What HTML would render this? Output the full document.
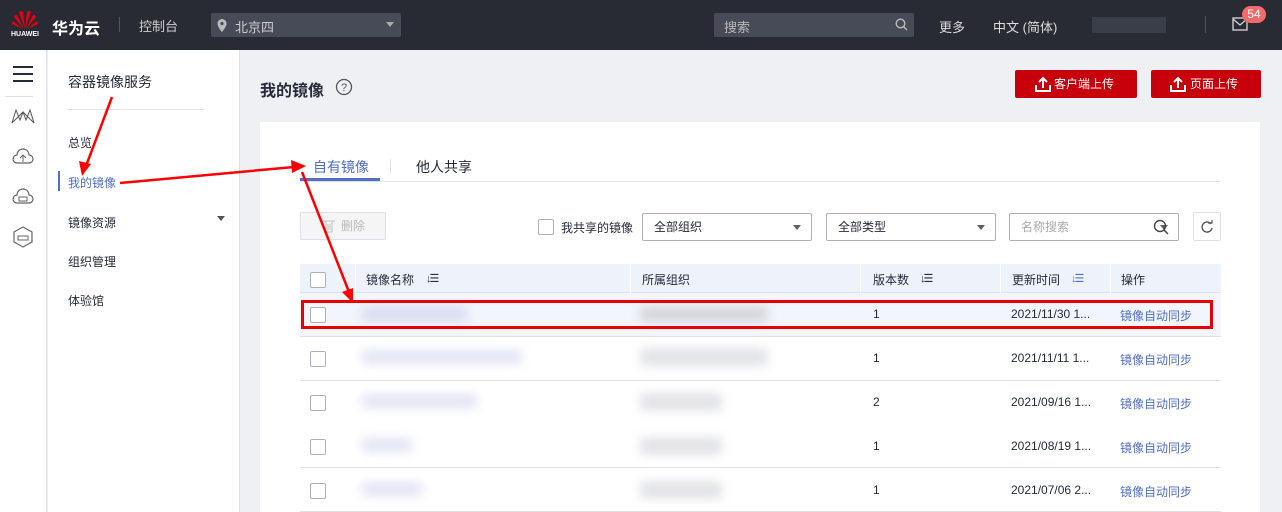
<!DOCTYPE html><html><head><meta charset="utf-8"><style>
*{margin:0;padding:0;box-sizing:border-box}
body{width:1282px;height:512px;overflow:hidden;position:relative;font-family:"Liberation Sans","Noto Sans CJK SC",sans-serif;font-size:12px;color:#252b3a;background:#eff0f4}
.a{position:absolute}
.cb{position:absolute;width:16px;height:16px;border:1px solid #adb0b8;border-radius:2px;background:#fff}
.sel{position:absolute;height:28px;border:1px solid #adb0b8;background:#fff;border-radius:2px;font-size:12px;line-height:26px;padding-left:11px}
.sel:after{content:"";position:absolute;right:10px;top:11px;border:4px solid transparent;border-top:5px solid #5e6066}
.row{position:absolute;left:300px;width:921px;height:44px;border-bottom:1px solid #dfe1e6;background:#fff}
.blur{position:absolute;filter:blur(5px);border-radius:4px}
.link{color:#526ecc}
.btn{position:absolute;top:70px;height:28px;background:#c7000b;color:#fff;font-size:12px;line-height:28px;border-radius:2px}
.srt{position:absolute;font-size:11px;letter-spacing:-2px}
</style></head><body>
<div class="a" style="left:0;top:0;width:1282px;height:50px;background:#282b33"></div>
<svg class="a" style="left:11px;top:9px" width="28" height="22" viewBox="0 0 28 22"><g fill="#e60012"><path d="M14 20 L8 3 Q10 1 12 3Z"/><path d="M14 20 L20 3 Q18 1 16 3Z"/><path d="M13 20 L3 8 Q4 5 6 6Z"/><path d="M15 20 L25 8 Q24 5 22 6Z"/><path d="M12 20 L1 15 Q1 13 2 12Z"/><path d="M16 20 L27 15 Q27 13 26 12Z"/></g></svg>
<div class="a" style="left:11px;top:31px;font-size:7px;color:#fff;font-weight:bold">HUAWEI</div>
<div class="a" style="left:52px;top:15px;font-size:16px;font-weight:bold;color:#fff">华为云</div>
<div class="a" style="left:119px;top:17px;width:1px;height:15px;background:#555"></div>
<div class="a" style="left:139px;top:16px;font-size:13px;color:#ccc">控制台</div>
<div class="a" style="left:211px;top:13px;width:190px;height:24px;background:#474b57;border-radius:2px"></div>
<svg class="a" style="left:217px;top:19px" width="10" height="13"><path d="M5 0a4.5 4.5 0 0 0-4.5 4.5C.5 8 5 13 5 13s4.5-5 4.5-8.5A4.5 4.5 0 0 0 5 0z" fill="#bbb"/><circle cx="5" cy="4.5" r="1.6" fill="#474b57"/></svg>
<div class="a" style="left:235px;top:17px;font-size:13px;color:#ccc">北京四</div>
<div class="a" style="left:386px;top:22px;border:4px solid transparent;border-top:5px solid #aaa"></div>
<div class="a" style="left:714px;top:13px;width:200px;height:24px;background:#474b57;border-radius:2px"></div>
<div class="a" style="left:724px;top:17px;font-size:13px;color:#bbb">搜索</div>
<svg class="a" style="left:895px;top:18px" width="13" height="13"><circle cx="5.5" cy="5.5" r="4.3" fill="none" stroke="#bbb" stroke-width="1.4"/><path d="M8.7 8.7 12 12" stroke="#bbb" stroke-width="1.4"/></svg>
<div class="a" style="left:939px;top:17px;font-size:13px;color:#ddd">更多</div>
<div class="a" style="left:993px;top:17px;font-size:13px;color:#ddd">中文 (简体)</div>
<div class="a" style="left:1092px;top:17px;width:74px;height:16px;background:#3a3e48"></div>
<div class="a" style="left:1205px;top:16px;width:1px;height:17px;background:#555"></div>
<svg class="a" style="left:1232px;top:17px" width="16" height="14"><rect x="1" y="1" width="14" height="12" fill="none" stroke="#ccc" stroke-width="1.4"/><path d="M1 2 8 8 15 2" fill="none" stroke="#ccc" stroke-width="1.4"/></svg>
<div class="a" style="left:1242px;top:6px;width:24px;height:17px;background:#f46a6a;border-radius:9px;color:#fff;font-size:12px;text-align:center;line-height:17px">54</div>
<div class="a" style="left:0;top:50px;width:47px;height:462px;background:#fff;border-right:1px solid #dfe1e6"></div>
<div class="a" style="left:13px;top:66px;width:20px;height:2px;background:#252b3a;box-shadow:0 7px 0 #252b3a,0 14px 0 #252b3a"></div>
<div class="a" style="left:5px;top:96px;width:28px;height:1px;background:#dfe1e6"></div>
<svg class="a" style="left:11px;top:108px" width="24" height="16"><path d="M1 15 5 2 9 12 12 4 15 12 19 2 23 15M1 15 12 4 23 15" fill="none" stroke="#555" stroke-width="1"/></svg>
<svg class="a" style="left:12px;top:148px" width="22" height="18"><path d="M5 15a4 4 0 0 1 0-8 6 6 0 0 1 12 0 4 4 0 0 1 0 8z" fill="none" stroke="#666" stroke-width="1.2"/><path d="M11 14V8M8 10l3-3 3 3" fill="none" stroke="#666"/></svg>
<svg class="a" style="left:12px;top:188px" width="22" height="18"><path d="M5 15a4 4 0 0 1 0-8 6 6 0 0 1 12 0 4 4 0 0 1 0 8z" fill="none" stroke="#666" stroke-width="1.2"/><rect x="7" y="9" width="8" height="4" fill="none" stroke="#666"/></svg>
<svg class="a" style="left:12px;top:226px" width="22" height="22"><path d="M11 1 20 6v10l-9 5-9-5V6z" fill="none" stroke="#666" stroke-width="1.2"/><rect x="6" y="10" width="10" height="4" fill="none" stroke="#666"/></svg>
<div class="a" style="left:48px;top:50px;width:192px;height:462px;background:#fff;border-right:1px solid #dfe1e6"></div>
<div class="a" style="left:68px;top:72px;font-size:14px">容器镜像服务</div>
<div class="a" style="left:68px;top:109px;width:136px;height:1px;background:#dfe1e6"></div>
<div class="a" style="left:68px;top:134px;font-size:12px">总览</div>
<div class="a" style="left:58px;top:171px;width:2px;height:20px;background:#526ecc"></div>
<div class="a link" style="left:68px;top:174px;font-size:12px">我的镜像</div>
<div class="a" style="left:68px;top:214px;font-size:12px">镜像资源</div>
<div class="a" style="left:217px;top:216px;border:4px solid transparent;border-top:5px solid #555"></div>
<div class="a" style="left:68px;top:253px;font-size:12px">组织管理</div>
<div class="a" style="left:68px;top:292px;font-size:12px">体验馆</div>
<div class="a" style="left:260px;top:77px;font-size:16px;font-weight:bold">我的镜像</div>
<svg class="a" style="left:335px;top:78px" width="18" height="18"><circle cx="9" cy="9" r="7.5" fill="none" stroke="#555" stroke-width="1.3"/><text x="9" y="13" font-size="11" text-anchor="middle" fill="#555" font-family="Liberation Sans">?</text></svg>
<div class="btn" style="left:1015px;width:122px"><svg class="a" style="left:20px;top:6px" width="16" height="16"><path d="M8 12V2M4 6l4-4 4 4M1 9v6h14V9" fill="none" stroke="#fff" stroke-width="2"/></svg><span class="a" style="left:39px">客户端上传</span></div>
<div class="btn" style="left:1151px;width:110px"><svg class="a" style="left:19px;top:6px" width="16" height="16"><path d="M8 12V2M4 6l4-4 4 4M1 9v6h14V9" fill="none" stroke="#fff" stroke-width="2"/></svg><span class="a" style="left:39px">页面上传</span></div>
<div class="a" style="left:260px;top:122px;width:1000px;height:390px;background:#fff"></div>
<div class="a" style="left:300px;top:181px;width:920px;height:1px;background:#dfe1e6"></div>
<div class="a link" style="left:313px;top:157px;font-size:14px">自有镜像</div>
<div class="a" style="left:300px;top:178px;width:80px;height:3px;background:#526ecc"></div>
<div class="a" style="left:390px;top:159px;width:1px;height:14px;background:#dfe1e6"></div>
<div class="a" style="left:416px;top:157px;font-size:14px">他人共享</div>
<div class="a" style="left:300px;top:212px;width:86px;height:28px;border:1px solid #dfe1e6;background:#f5f5f6;border-radius:2px;color:#bbb;line-height:26px;padding-left:40px">删除</div>
<svg class="a" style="left:322px;top:219px" width="14" height="14"><path d="M1 2h12M4 2v11h6V2M6 5v6M8 5v6" fill="none" stroke="#ccc" stroke-width="1.2"/></svg>
<div class="cb" style="left:538px;top:219px"></div>
<div class="a" style="left:561px;top:219px">我共享的镜像</div>
<div class="sel" style="left:642px;top:213px;width:170px">全部组织</div>
<div class="sel" style="left:826px;top:213px;width:170px">全部类型</div>
<div class="sel" style="left:1009px;top:213px;width:170px;color:#aaa">名称搜索</div>
<svg class="a" style="left:1153px;top:219px" width="16" height="16"><circle cx="7" cy="7" r="5.5" fill="none" stroke="#444" stroke-width="1.4"/><path d="M11 11 15 15" stroke="#444" stroke-width="1.5"/></svg>
<div class="a" style="left:1193px;top:212px;width:28px;height:29px;border:1px solid #dfe1e6;border-radius:2px"></div>
<svg class="a" style="left:1200px;top:220px" width="14" height="14"><path d="M11 4A5 5 0 1 0 12 8" fill="none" stroke="#555" stroke-width="1.4"/><path d="M8 3h4V0" fill="none" stroke="#555" stroke-width="1.2"/></svg>
<div class="a" style="left:300px;top:264px;width:921px;height:29px;background:#eef2fa;border-bottom:1px solid #dfe1e6"></div>
<div class="cb" style="left:310px;top:272px"></div>
<div class="a" style="left:355px;top:264px;width:1px;height:29px;background:#fff"></div>
<div class="a" style="left:366px;top:271px">镜像名称</div><div class="srt" style="left:426px;top:272px">↓☰</div>
<div class="a" style="left:630px;top:264px;width:1px;height:29px;background:#fff"></div>
<div class="a" style="left:642px;top:271px">所属组织</div>
<div class="a" style="left:860px;top:264px;width:1px;height:29px;background:#fff"></div>
<div class="a" style="left:873px;top:271px">版本数</div><div class="srt" style="left:920px;top:272px">↓☰</div>
<div class="a" style="left:1000px;top:264px;width:1px;height:29px;background:#fff"></div>
<div class="a" style="left:1012px;top:271px">更新时间</div><div class="srt" style="left:1071px;top:272px;color:#526ecc">↓☰</div>
<div class="a" style="left:1110px;top:264px;width:1px;height:29px;background:#fff"></div>
<div class="a" style="left:1121px;top:271px">操作</div>
<div class="row" style="top:293px;background:#f2f5fc"></div>
<div class="row" style="top:337px"></div>
<div class="row" style="top:381px"></div>
<div class="row" style="top:424px"></div>
<div class="row" style="top:468px"></div>
<div class="cb" style="left:310px;top:307px"></div><div class="blur" style="left:362px;top:307px;width:105px;height:14px;background:#d8dcf0"></div><div class="blur" style="left:640px;top:306px;width:128px;height:16px;background:#d5d6db"></div><div class="a" style="left:873px;top:307px">1</div><div class="a" style="left:1011px;top:307px">2021/11/30 1...</div><div class="a link" style="left:1120px;top:307px">镜像自动同步</div>
<div class="cb" style="left:310px;top:351px"></div><div class="blur" style="left:362px;top:350px;width:160px;height:14px;background:#e2e5f4"></div><div class="blur" style="left:640px;top:348px;width:128px;height:18px;background:#e3e4e8"></div><div class="a" style="left:873px;top:351px">1</div><div class="a" style="left:1011px;top:351px">2021/11/11 1...</div><div class="a link" style="left:1120px;top:351px">镜像自动同步</div>
<div class="cb" style="left:310px;top:395px"></div><div class="blur" style="left:362px;top:394px;width:115px;height:14px;background:#e2e5f4"></div><div class="blur" style="left:640px;top:393px;width:82px;height:18px;background:#e3e4e8"></div><div class="a" style="left:873px;top:395px">2</div><div class="a" style="left:1011px;top:395px">2021/09/16 1...</div><div class="a link" style="left:1120px;top:395px">镜像自动同步</div>
<div class="cb" style="left:310px;top:439px"></div><div class="blur" style="left:362px;top:438px;width:50px;height:14px;background:#e2e5f4"></div><div class="blur" style="left:640px;top:437px;width:82px;height:18px;background:#e3e4e8"></div><div class="a" style="left:873px;top:439px">1</div><div class="a" style="left:1011px;top:439px">2021/08/19 1...</div><div class="a link" style="left:1120px;top:439px">镜像自动同步</div>
<div class="cb" style="left:310px;top:483px"></div><div class="blur" style="left:362px;top:482px;width:60px;height:14px;background:#e2e5f4"></div><div class="blur" style="left:640px;top:481px;width:82px;height:18px;background:#e3e4e8"></div><div class="a" style="left:873px;top:483px">1</div><div class="a" style="left:1011px;top:483px">2021/07/06 2...</div><div class="a link" style="left:1120px;top:483px">镜像自动同步</div>
<div class="a" style="left:301px;top:300px;width:912px;height:29px;border:3px solid #e60000"></div>
<svg class="a" style="left:0;top:0" width="1282" height="512"><g stroke="#f00" stroke-width="2.5" fill="#f00">
<line x1="112" y1="97" x2="86" y2="166"/><path d="M82 176 79 161 91 164Z" stroke="none"/>
<line x1="120" y1="183" x2="294" y2="167"/><path d="M306 166 291 160 292 173Z" stroke="none"/>
<line x1="302" y1="172" x2="349" y2="292"/><path d="M353 303 342 292 353 288Z" stroke="none"/>
</g></svg>
</body></html>
